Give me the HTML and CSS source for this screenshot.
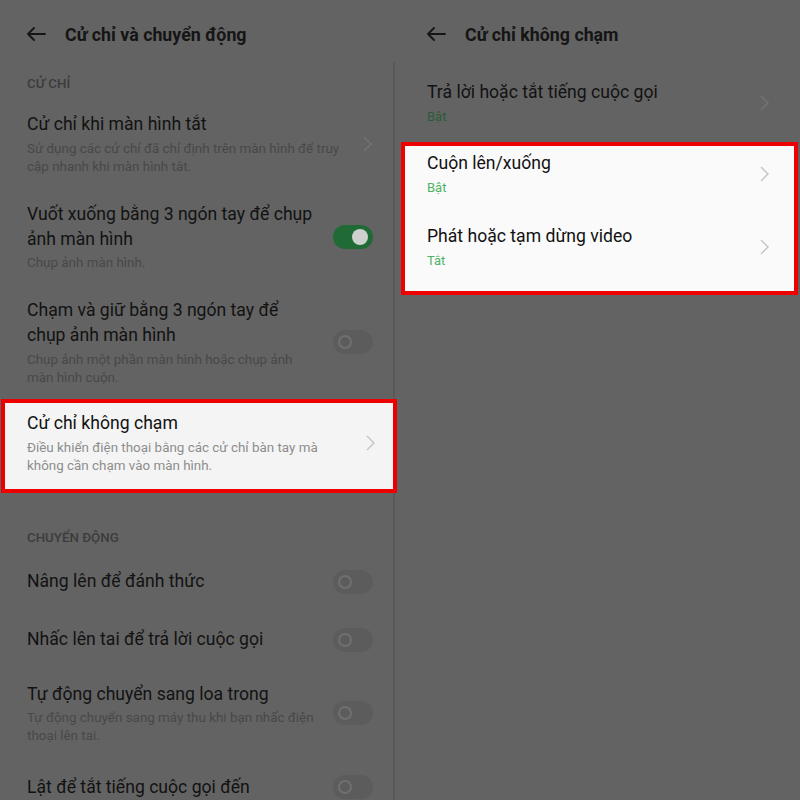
FILE: index.html
```html
<!DOCTYPE html>
<html lang="vi">
<head>
<meta charset="utf-8">
<title>Cử chỉ</title>
<link rel="stylesheet" href="styles.css">
</head>
<body>
<div class="screen">
  <section class="panel">
    <header class="bar">
      <svg class="back" width="20" height="14" viewBox="0 0 20 14"><path d="M19 7H2M8 1L2 7l6 6" fill="none" stroke="currentColor" stroke-width="1.8" stroke-linecap="round" stroke-linejoin="round"/></svg>
      <h1>Cử chỉ và chuyển động</h1>
    </header>
    <div class="list scroll">
      <div class="label">CỬ CHỈ</div>
      <div class="item">
        <div class="text"><div class="title">Cử chỉ khi màn hình tắt</div><div class="sub">Sử dụng các cử chỉ đã chỉ định trên màn hình để truy<br>cập nhanh khi màn hình tắt.</div></div>
        <svg class="chev" width="9" height="16" viewBox="0 0 9 16"><path d="M1 1l7 7-7 7" fill="none" stroke="currentColor" stroke-width="1.4"/></svg>
      </div>
      <div class="item">
        <div class="text"><div class="title">Vuốt xuống bằng 3 ngón tay để chụp<br>ảnh màn hình</div><div class="sub">Chụp ảnh màn hình.</div></div>
        <span class="toggle on"><span class="knob"></span></span>
      </div>
      <div class="item">
        <div class="text"><div class="title">Chạm và giữ bằng 3 ngón tay để<br>chụp ảnh màn hình</div><div class="sub">Chụp ảnh một phần màn hình hoặc chụp ảnh<br>màn hình cuộn.</div></div>
        <span class="toggle"><span class="knob"></span></span>
      </div>
      <div class="hl hl-left">
        <div class="item">
          <div class="text"><div class="title">Cử chỉ không chạm</div><div class="sub">Điều khiển điện thoại bằng các cử chỉ bàn tay mà<br>không cần chạm vào màn hình.</div></div>
          <svg class="chev" width="9" height="16" viewBox="0 0 9 16"><path d="M1 1l7 7-7 7" fill="none" stroke="currentColor" stroke-width="1.4"/></svg>
        </div>
      </div>
      <div class="label label-gap">CHUYỂN ĐỘNG</div>
      <div class="item">
        <div class="text"><div class="title">Nâng lên để đánh thức</div></div>
        <span class="toggle"><span class="knob"></span></span>
      </div>
      <div class="item">
        <div class="text"><div class="title">Nhấc lên tai để trả lời cuộc gọi</div></div>
        <span class="toggle"><span class="knob"></span></span>
      </div>
      <div class="item">
        <div class="text"><div class="title">Tự động chuyển sang loa trong</div><div class="sub">Tự động chuyển sang máy thu khi bạn nhấc điện<br>thoại lên tai.</div></div>
        <span class="toggle"><span class="knob"></span></span>
      </div>
      <div class="item">
        <div class="text"><div class="title">Lật để tắt tiếng cuộc gọi đến</div></div>
        <span class="toggle"><span class="knob"></span></span>
      </div>
    </div>
  </section>
  <section class="panel">
    <header class="bar">
      <svg class="back" width="20" height="14" viewBox="0 0 20 14"><path d="M19 7H2M8 1L2 7l6 6" fill="none" stroke="currentColor" stroke-width="1.8" stroke-linecap="round" stroke-linejoin="round"/></svg>
      <h1>Cử chỉ không chạm</h1>
    </header>
    <div class="list">
      <div class="item ritem first">
        <div class="text"><div class="title">Trả lời hoặc tắt tiếng cuộc gọi</div><div class="status">Bật</div></div>
        <svg class="chev" width="9" height="16" viewBox="0 0 9 16"><path d="M1 1l7 7-7 7" fill="none" stroke="currentColor" stroke-width="1.4"/></svg>
      </div>
      <div class="hl hl-right">
        <div class="item ritem">
          <div class="text"><div class="title">Cuộn lên/xuống</div><div class="status">Bật</div></div>
          <svg class="chev" width="9" height="16" viewBox="0 0 9 16"><path d="M1 1l7 7-7 7" fill="none" stroke="currentColor" stroke-width="1.4"/></svg>
        </div>
        <div class="item ritem">
          <div class="text"><div class="title">Phát hoặc tạm dừng video</div><div class="status">Tắt</div></div>
          <svg class="chev" width="9" height="16" viewBox="0 0 9 16"><path d="M1 1l7 7-7 7" fill="none" stroke="currentColor" stroke-width="1.4"/></svg>
        </div>
      </div>
    </div>
  </section>
</div>
</body>
</html>
```
FILE: styles.css
```css
* { box-sizing: border-box; }
html, body { margin: 0; padding: 0; }
body {
  background: #636363;
  font-family: Roboto, "Noto Sans", "Liberation Sans", sans-serif;
  color: #111;
}
.screen {
  display: flex;
  width: 800px;
  height: 800px;
  overflow: hidden;
}
.panel {
  width: 400px;
  height: 800px;
  flex: none;
  display: flex;
  flex-direction: column;
  overflow: hidden;
}
.bar {
  flex: none;
  height: 62px;
  padding: 6px 0 0 26px;
  display: flex;
  align-items: center;
  gap: 19px;
  color: #151515;
}
.bar h1 {
  margin: 0;
  font-size: 17.8px;
  font-weight: 700;
}
.back { flex: none; }
.list {
  display: flex;
  flex-direction: column;
  flex: 1 0 auto;
}
.list > * { flex: none; }
.scroll {
  margin-right: 5px;
  border-right: 2px solid #595959;
}
.label {
  padding: 13px 27px 6px;
  font-size: 13.3px;
  line-height: 18px;
  color: #3c3c3c;
  font-weight: 500;
}
.label-gap { padding-top: 36px; }
.item {
  display: flex;
  align-items: center;
  min-height: 58px;
  padding: 13px 20px 13px 27px;
}
.text { flex: 1; min-width: 0; white-space: nowrap; }
.title {
  font-size: 17.6px;
  line-height: 25px;
  color: #121212;
}
.sub {
  margin-top: 2.5px;
  font-size: 13.4px;
  line-height: 18px;
  color: #484848;
}
.status {
  margin-top: 3px;
  font-size: 13px;
  line-height: 18px;
  color: #2b5c37;
}
.chev {
  flex: none;
  color: #747474;
  margin-right: 1px;
}
.toggle {
  flex: none;
  width: 40px;
  height: 24px;
  border-radius: 12px;
  background: #5c5c5c;
  display: flex;
  align-items: center;
  padding: 0 5px;
}
.knob {
  width: 14px;
  height: 14px;
  border-radius: 50%;
  border: 2.5px solid #707070;
}
.toggle.on {
  background: #1f6a35;
  justify-content: flex-end;
}
.toggle.on .knob {
  background: #cdd2ce;
  border: none;
  width: 16px;
  height: 16px;
}
.hl {
  border: 4px solid #ee0000;
}
.hl-left {
  margin: -1px -4px 0 1px;
  background: #f4f4f4;
}
.hl-left .item {
  padding: 8.5px 17px 14px 22px;
}
.ritem {
  padding: 13.5px 30px 13.5px 27px;
}
.ritem.first { margin-top: 4px; }
.hl-right {
  margin: 3px 2px 0 1px;
  background: #fafafa;
  padding-bottom: 8px;
}
.hl-right .ritem {
  padding: 13.5px 24px 13.5px 22px;
}
.hl-right .ritem:first-child { padding-top: 4.5px; }
.hl .title { color: #111; }
.hl .sub { color: #8d8d8d; }
.hl .status { color: #4cb464; }
.hl .chev { color: #c4c4c4; }
```
